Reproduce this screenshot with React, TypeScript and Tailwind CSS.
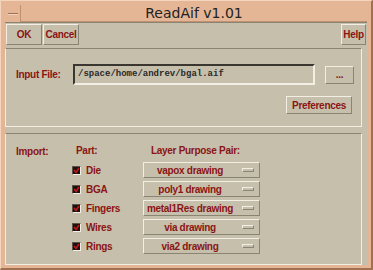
import React from 'react';

const raised = 'border border-t-[#f2eee4] border-l-[#f2eee4] border-b-[#8a8472] border-r-[#8a8472]';
const label = 'text-[10px] font-bold text-[#8b1414] tracking-[-0.3px] whitespace-nowrap';

const MotifButton = ({ text, className }: { text: string; className: string }) => (
  <button className={`flex items-center justify-center bg-[#c6bfac] ${label} ${raised} ${className}`}>
    {text}
  </button>
);

const parts = [
  { name: 'Die', layer: 'vapox drawing' },
  { name: 'BGA', layer: 'poly1 drawing' },
  { name: 'Fingers', layer: 'metal1Res drawing' },
  { name: 'Wires', layer: 'via drawing' },
  { name: 'Rings', layer: 'via2 drawing' },
];

const CheckBox = () => (
  <span className="w-[9px] h-[9px] bg-[#1c1010] border border-t-[#5a5448] border-l-[#5a5448] border-b-[#f2eee4] border-r-[#f2eee4] flex items-center justify-center">
    <svg width="7" height="7" viewBox="0 0 7 7">
      <path d="M1 3 L3 5.5 L6 1" stroke="#c01818" strokeWidth="1.6" fill="none" />
    </svg>
  </span>
);

export default function App() {
  return (
    <div
      className="w-[373px] h-[270px] bg-[#e4b696] flex flex-col border-l border-t border-[#f4d4bc] border-r-2 border-b-2 border-r-[#a07050] border-b-[#a07050]"
      style={{ fontFamily: '"Liberation Sans", Arial, sans-serif' }}
    >
      {/* title bar */}
      <div className="h-[21px] flex items-stretch pt-[4px] px-[4px]">
        <div className="w-[16px] flex items-center justify-center border-r border-[#c09070]">
          <span className="w-[10px] h-[2px] bg-[#a07050] border-b border-[#f4d4bc]" />
        </div>
        <div
          className="flex-1 flex items-center justify-center text-[14px] text-[#222] border-b border-[#c09070]"
          style={{ fontFamily: '"DejaVu Sans", sans-serif' }}
        >
          ReadAif v1.01
        </div>
      </div>

      {/* client */}
      <div className="flex-1 mx-[4px] mb-[3px] bg-[#c6bfac] flex flex-col border-t border-[#8a8472]">
        <div className="flex h-[21px] mt-[1px] ml-[1px] mr-[1px]">
          <MotifButton text="OK" className="w-[36px]" />
          <MotifButton text="Cancel" className="w-[36px] ml-px" />
          <div className="flex-1" />
          <MotifButton text="Help" className="w-[25px]" />
        </div>

        {/* input panel */}
        <div className="mt-[3px] mr-[5px] h-[79px] border border-t-[#8a8472] border-l-[#f2eee4] border-r-[#f2eee4] border-b-[#f2eee4] flex flex-col">
          <div className="flex items-center mt-[15px] h-[21px]">
            <span className={`ml-[10px] w-[57px] ${label}`}>Input File:</span>
            <div className="w-[242px] h-[21px] border-2 border-t-[#3a3630] border-l-[#3a3630] border-b-[#f2eee4] border-r-[#f2eee4] flex items-center">
              <span
                className="ml-[3px] text-[9px] text-[#2a2a2a] font-bold"
                style={{ fontFamily: '"Liberation Mono", monospace' }}
              >
                /space/home/andrev/bgal.aif
              </span>
            </div>
            <MotifButton text="..." className="ml-[10px] w-[29px] h-[18px]" />
          </div>
          <div className="flex justify-end mt-[11px] mr-[9px]">
            <MotifButton text="Preferences" className="w-[66px] h-[18px]" />
          </div>
        </div>

        {/* import panel */}
        <div className="mt-[6px] mr-[5px] flex-1 border border-t-[#8a8472] border-l-[#f2eee4] border-r-[#f2eee4] border-b-[#f2eee4] flex">
          <div className={`w-[60px] pl-[10px] pt-[10px] ${label}`}>Import:</div>
          <div className="flex flex-col pt-[10px]">
            <div className={`flex h-[13px] items-center ${label}`}>
              <span className="w-[75px] pl-[10px]">Part:</span>
              <span className="pl-[10px]">Layer Purpose Pair:</span>
            </div>
            <div className="flex flex-col gap-[3px] mt-[5px]">
              {parts.map((p) => (
                <div key={p.name} className="flex items-center h-[16px]">
                  <div className="w-[77px] flex items-center">
                    <span className="ml-[6px]"><CheckBox /></span>
                    <span className={`ml-[5px] ${label}`}>{p.name}</span>
                  </div>
                  <div className={`w-[117px] h-[16px] bg-[#c6bfac] ${raised} flex items-center`}>
                    <span className={`flex-1 text-center pr-[6px] ${label}`}>{p.layer}</span>
                    <span className={`w-[12px] h-[4px] mr-[5px] ${raised}`} />
                  </div>
                </div>
              ))}
            </div>
          </div>
        </div>
      </div>
    </div>
  );
}
